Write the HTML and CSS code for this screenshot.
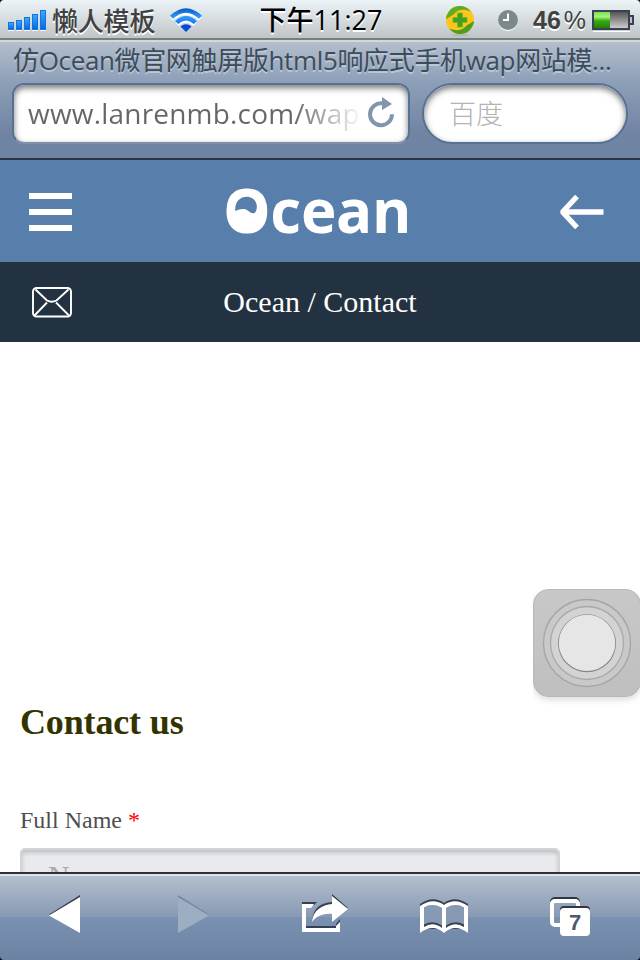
FILE: index.html
```html
<!DOCTYPE html>
<html lang="zh-CN">
<head>
<meta charset="utf-8">
<title>Ocean / Contact</title>
<link rel="stylesheet" href="styles.css">
</head>
<body>
<div class="phone">
  <header class="status">
    <div class="carrier">
      <div class="signal"><i class="s1"></i><i class="s2"></i><i class="s3"></i><i class="s4"></i><i class="s5"></i></div>
      <span class="carrier-name">懒人模板</span>
      <svg class="wifi" width="34" height="26" viewBox="0 0 34 26">
        <defs><linearGradient id="wf" x1="0" y1="0" x2="0" y2="26" gradientUnits="userSpaceOnUse"><stop offset="0" stop-color="#0a55c0"/><stop offset=".35" stop-color="#2c9aff"/><stop offset="1" stop-color="#003cd0"/></linearGradient></defs>
        <g fill="none" stroke="#fff" stroke-width="4.4" transform="translate(0 1.6)"><path d="M2.5 9.3Q17-2.8 31.500 9.300M8 14.800Q17 6.800 26 14.800"/></g>
        <g fill="none" stroke="url(#wf)" stroke-width="4.300"><path d="M2.500 9.300Q17-4.500 31.500 9.300M7.700 14.500Q17 6 26.300 14.500"/></g>
        <path d="M11.500 18.500Q17 14 22.500 18.500L17 24Z" fill="#0549df"/>
      </svg>
    </div>
    <time class="clock">下午11:27</time>
    <div class="indicators">
      <svg class="guard" width="30" height="32" viewBox="0 0 30 32">
        <ellipse cx="15" cy="30" rx="9" ry="1.200" fill="#b3bbae"/>
        <circle cx="15" cy="15" r="14" fill="#ffc51a"/>
        <path d="M3 8C7 0 19-2 26 6.500C19 4 14 4 10 8C7 11 4 12 1 14Q1 11 3 8Z" fill="#60ad25"/>
        <path d="M27 22C23 30 11 32 4 23.500C11 26 16 26 20 22C23 19 26 18 29 16Q29 19 27 22Z" fill="#4c9d20"/>
        <path d="M12.500 8h5v4.500H22v5h-4.500V22h-5v-4.500H8v-5h4.500Z" fill="#43a021" stroke="#72b925"/>
      </svg>
      <svg class="alarm" width="22" height="24" viewBox="0 0 22 24"><circle cx="11" cy="12" r="10" fill="#fff"/><circle cx="11" cy="11" r="10" fill="#7c898b"/><path d="M11 4.500V11H6" fill="none" stroke="#fff" stroke-width="2"/></svg>
      <span class="percent"><b>46</b><span>%</span></span>
      <svg class="battery" width="43" height="22" viewBox="0 0 43 22">
        <defs><linearGradient id="bg" x1="0" y1="0" x2="0" y2="1"><stop offset="0" stop-color="#7be052"/><stop offset=".3" stop-color="#a7f57c"/><stop offset=".55" stop-color="#36ac11"/><stop offset="1" stop-color="#228108"/></linearGradient><linearGradient id="be" x1="0" y1="0" x2="0" y2="1"><stop offset="0" stop-color="#555"/><stop offset="1" stop-color="#ccc"/></linearGradient></defs>
        <path d="M1 21.500h37" stroke="#fff"/><rect x="1" y="1" width="36" height="18" fill="#eee" stroke="#3b4055" stroke-width="2"/><rect x="2" y="2" width="16" height="16" fill="url(#bg)"/><rect x="18" y="2" width="18" height="16" fill="url(#be)"/><path d="M38 6h3v8h-3" fill="#bcc0c8" stroke="#3b4055" stroke-width="2"/>
      </svg>
    </div>
  </header>
  <section class="browser">
    <div class="page-title">仿Ocean微官网触屏版html5响应式手机wap网站模...</div>
    <div class="fields">
      <div class="address"><span class="url">www.lanrenmb.com/wap</span>
        <svg class="reload" width="28" height="32" viewBox="0 0 28 32"><path d="M15 6.300A11 11 0 1 0 25 17.300" fill="none" stroke="#8295af" stroke-width="4"/><path d="M15 0L25 7L15 13Z" fill="#8295af"/></svg>
      </div>
      <div class="search">百度</div>
    </div>
  </section>
  <nav class="site-nav">
    <div class="menu"><i></i><i></i><i></i></div>
    <div class="logo">Ocean<svg class="wave" width="28" height="38" viewBox="0 0 28 38"><ellipse cx="13.500" cy="18.500" rx="13.500" ry="17.500" fill="#fff"/><path d="M2.300 18C1.500 9 7 3.700 13.500 3.700C20 3.700 23.500 8 23.800 13C24 16.500 23 20 20.300 20.300C17 20.300 14.500 16.300 11 16C8 15.800 5 16.700 2.300 18Z" fill="#587fac"/></svg></div>
    <svg class="back" width="44" height="36" viewBox="0 0 44 36"><path d="M43.500 18H5M17 2.500L3 17.500V18.500L17 33.500" fill="none" stroke="#fff" stroke-width="5.300"/></svg>
  </nav>
  <div class="crumb">
    <svg class="mail" width="40" height="31" viewBox="0 0 40 31"><g fill="none" stroke="#fff" stroke-width="1.900"><rect x="1" y="1" width="38" height="28.500" rx="3.500"/><path d="M3.500 2.500L15 13.500Q19.500 16 24.500 13.500L36.500 2.500M2.500 28.500L15 15.500M37 28.500L24 15.500"/></g></svg>
    <span>Ocean / Contact</span>
  </div>
  <main class="content">
    <h1>Contact us</h1>
    <label>Full Name <em>*</em></label>
    <div class="input">Name</div>
    <svg class="assist" width="107" height="116" viewBox="0 0 107 116">
      <defs><linearGradient id="ag" x1="0" y1="0" x2="0" y2="1"><stop offset="0" stop-color="#c8c8c8"/><stop offset="1" stop-color="#bfbfbf"/></linearGradient></defs>
      <rect class="assist-box" x=".5" y=".5" width="107" height="107" rx="15" fill="url(#ag)" stroke="#b8b8b8"/>
      <circle cx="54" cy="54" r="43.500" fill="#c9c9c9" stroke="#a4a4a4" stroke-width="1.300"/>
      <circle cx="54" cy="54" r="36.500" fill="#d3d3d3" stroke="#a9a9a9" stroke-width="1.300"/>
      <circle cx="54" cy="54.300" r="29" fill="#858585"/><circle cx="54" cy="53.900" r="28.200" fill="#e6e6e6"/>
    </svg>
  </main>
  <footer class="toolbar">
    <svg width="32" height="40" viewBox="0 0 32 40"><path d="M0 20.500L31 1V36Z" fill="#354052"/><path d="M0 21.500L31 3V39Z" fill="#fff"/></svg>
    <svg class="next" width="32" height="40" viewBox="0 0 32 40"><path d="M31 20.500L0 1V20Z" fill="#74869b"/><path d="M31 21.500L0 3V39Z" fill="#9daec2"/></svg>
    <svg class="share" width="48" height="40" viewBox="0 0 48 40">
      <g fill="#354052"><path d="M0 8h15l-3 3H0ZM4 32h30v3H4ZM34 30l4-5v3l-4 5Z"/><path d="M10 26C12 13 19 9 30 8V0L46 14L30 26V18C20 17 14 21 10 26Z"/></g>
      <path d="M0 10H12L9 14H4V34H34V32L38 28V38H0Z" fill="#fff"/><path d="M10 28C11 16 20 11 30 10V2L46 15L30 28V20C20 19 14 23 10 28Z" fill="#fff"/>
    </svg>
    <svg class="book" width="48" height="36" viewBox="0 0 48 36">
      <path d="M0 5Q13-4 24 4Q35-4 48 5V12H0ZM4 24Q13 19 22 25V30H4ZM26 25Q35 19 44 24V30H26Z" fill="#354052"/>
      <path class="book-page" d="M4 8.500Q13 3.500 22 9V26.500Q13 20.500 4 25.500ZM26 9Q35 3.500 44 8.500V25.500Q35 20.500 26 26.500Z"/>
      <path d="M0 7Q13-2 24 6Q35-2 48 7V34Q35 24 24 34Q13 24 0 34ZM4 8.500V28Q13 22 22 29V9Q13 3.500 4 8.500ZM26 9V29Q35 22 44 28V8.500Q35 3.500 26 9Z" fill="#fff" fill-rule="evenodd"/>
    </svg>
    <div class="tabs"><i></i><b>7</b></div>
  </footer>
</div>
</body>
</html>
```
FILE: styles.css
```css
* { box-sizing: border-box; }
body { margin: 0; background: #000; }
svg { display: block; flex: none; }
.phone { width: 640px; height: 960px; display: flex; flex-direction: column; overflow: hidden; border-radius: 4px; font-family: "Open Sans", "Noto Sans CJK SC", sans-serif; }
.status { height: 40px; flex: none; display: grid; grid-template-columns: 240px 1fr 240px; background: linear-gradient(#edf4f7, #bfc5c7); border-bottom: 2px solid #747f7f; color: #414141; text-shadow: 0 2px 0 #fff; }
.carrier { display: flex; align-items: center; padding-left: 8px; }
.signal { display: flex; align-items: flex-end; gap: 2px; height: 20px; width: 38px; }
.signal i { width: 6px; background: linear-gradient(#35aafa, #0868e8); border: 1px solid #1674df; box-shadow: 0 1px #fff; }
.s1 { height: 8px; } .s2 { height: 10px; } .s3 { height: 13px; } .s4 { height: 16px; } .s5 { height: 20px; }
.carrier-name { margin-left: 6px; font: 500 26px/36px "Noto Sans CJK SC", sans-serif; white-space: nowrap; letter-spacing: -.2px; }
.wifi { margin-left: 14px; margin-top: 2px; }
.clock { color: #000; font-size: 27px; font-weight: 500; line-height: 39px; text-align: center; white-space: nowrap; padding-left: 2px; }
.indicators { display: flex; align-items: center; justify-content: flex-end; padding-right: 5px; }
.guard { margin-right: 22px; margin-top: 2px; }
.alarm { margin-right: 14px; margin-top: 2px; }
.battery { margin-top: 2px; }
.percent { width: 53px; margin-right: 6px; display: flex; justify-content: space-between; font: 25px/36px "Liberation Sans", sans-serif; }
.browser { height: 120px; flex: none; background: linear-gradient(#b4bfcc, #8fa0b9 38px, #7184a3 90px, #6e83a2); border-top: 2px solid #d3d7da; border-bottom: 2px solid #2c3548; }
.page-title { height: 41px; padding-left: 13px; white-space: nowrap; color: #3e4b59; font-size: 26px; line-height: 36px; text-shadow: 0 2px 0 #b9c7d9; letter-spacing: -.35px; }
.fields { display: flex; gap: 12px; padding: 0 12px; }
.address, .search { height: 61px; border: 2px solid #557196; background: #fff; box-shadow: inset 0 3px 6px #777; }
.address { width: 398px; border-radius: 12px; display: flex; align-items: center; justify-content: space-between; padding: 0 13px 2px 14px; border-bottom-color: #7f91aa; }
.url { width: 333px; overflow: hidden; white-space: nowrap; font-size: 28px; line-height: 50px; letter-spacing: .2px; background: linear-gradient(90deg, #666 265px, #fff 335px); background-clip: text; color: transparent; }
.search { width: 206px; border-radius: 31px; padding-left: 25px; color: #b3b3b3; font: 300 27px/56px "Noto Sans CJK SC", sans-serif; }
.site-nav { height: 102px; flex: none; display: grid; grid-template-columns: 44px 1fr 44px; align-items: center; padding: 1px 36px 0 28px; background: #587fac; }
.menu { display: flex; flex-direction: column; gap: 10px; padding-left: 1px; }
.menu i { height: 6px; background: #fff; width: 43px; }
.logo { position: relative; justify-self: center; color: #fff; font-size: 60px; line-height: 98px; padding-bottom: 3px; margin-left: 2px; font-weight: 700; letter-spacing: -.3px; }
.wave { position: absolute; left: 10px; top: 32px; }
.crumb { height: 80px; flex: none; display: grid; grid-template-columns: 40px 1fr 40px; align-items: center; padding: 0 32px; background: #233240; color: #fff; font: 30px/80px "Liberation Serif", serif; text-align: center; }
.mail { margin-top: 1px; }
.content { position: relative; height: 530px; flex: none; overflow: hidden; background: #fff; padding: 360px 20px 0; font-family: "Liberation Serif", serif; }
h1 { margin: 0; height: 102px; color: #330; font-size: 36px; line-height: 41px; letter-spacing: -.15px; }
label { display: block; height: 44px; font-size: 24px; line-height: 32px; color: #4f4f4f; }
label em { color: #f00; font-style: normal; }
.input { width: 540px; height: 80px; border: 2px solid #d2d4d7; border-radius: 5px; background: #e9eaee; box-shadow: inset 0 3px 4px #bfc1c4; padding: 9px 26px; font-size: 30px; line-height: 34px; color: #aaa; }
.assist { position: absolute; right: 0; top: 247px; }
.assist-box { filter: drop-shadow(0 3px 3px #ddd); }
.toolbar { height: 88px; flex: none; display: flex; align-items: flex-start; padding: 20px 50px 0 49px; border-top: 2px solid #2b303b; background: linear-gradient(#dfe4e8 0 2px, #b3c0ce 2px, #8799b3 43px, #7b91b1 43px, #6c82a3); }
.next { margin-left: 97px; }
.share { margin-left: 92px; }
.book { margin: 5px 0 0 70px; }
.book-page { fill: #8799b3; }
.tabs { position: relative; width: 40px; height: 38px; margin: 5px 0 0 82px; }
.tabs i { position: absolute; left: 0; top: 0; width: 30px; height: 28px; border: 4px solid #fff; border-radius: 5px; box-shadow: 0 -2px #303742; }
.tabs b { position: absolute; right: 0; bottom: 1px; width: 30px; height: 28px; border-radius: 4px; background: #fff; box-shadow: 0 -2px #303742; text-align: center; font: 700 22px/30px "Liberation Sans", sans-serif; color: #4c596c; }
```
